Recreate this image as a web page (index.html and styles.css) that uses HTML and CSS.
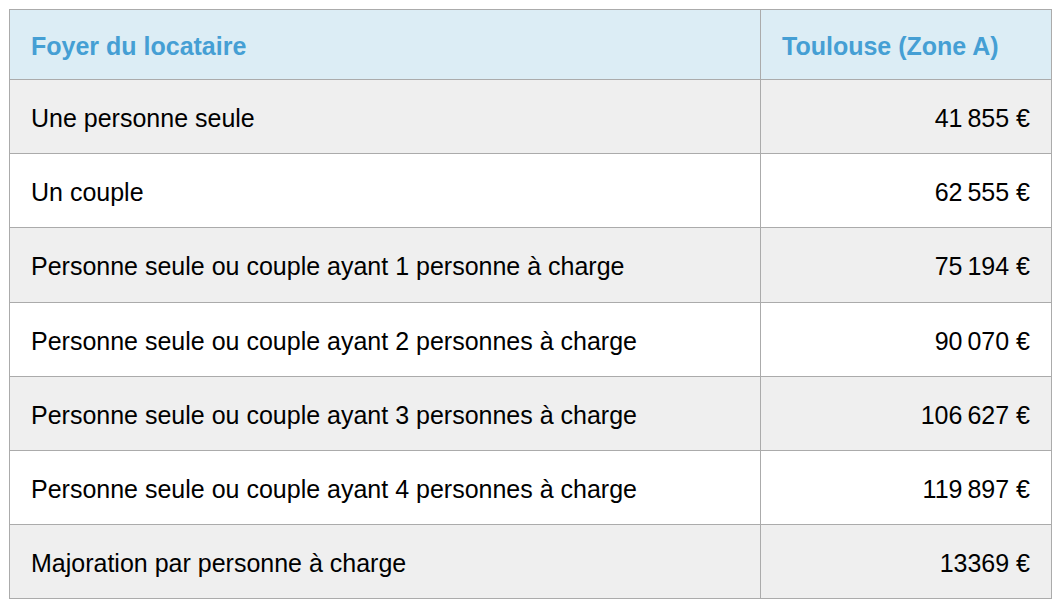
FILE: index.html
```html
<!DOCTYPE html>
<html lang="fr">
<head>
<meta charset="utf-8">
<title>Plafonds</title>
<link rel="stylesheet" href="styles.css">
</head>
<body>
<table class="tbl">
  <thead>
    <tr>
      <th class="c1">Foyer du locataire</th>
      <th class="c2">Toulouse (Zone A)</th>
    </tr>
  </thead>
  <tbody>
    <tr class="odd"><td>Une personne seule</td><td class="num">41&#8239;855 €</td></tr>
    <tr><td>Un couple</td><td class="num">62&#8239;555 €</td></tr>
    <tr class="odd"><td>Personne seule ou couple ayant 1 personne à charge</td><td class="num">75&#8239;194 €</td></tr>
    <tr><td>Personne seule ou couple ayant 2 personnes à charge</td><td class="num">90&#8239;070 €</td></tr>
    <tr class="odd"><td>Personne seule ou couple ayant 3 personnes à charge</td><td class="num">106&#8239;627 €</td></tr>
    <tr><td>Personne seule ou couple ayant 4 personnes à charge</td><td class="num">119&#8239;897 €</td></tr>
    <tr class="odd"><td>Majoration par personne à charge</td><td class="num">13369 €</td></tr>
  </tbody>
</table>
</body>
</html>
```

FILE: styles.css
```css
html, body {
  margin: 0;
  padding: 0;
  background: #ffffff;
}
body {
  padding: 9px;
  font-family: "Liberation Sans", Arial, Helvetica, sans-serif;
  color: #000;
}
.tbl {
  width: 1043px;
  border-collapse: collapse;
  font-size: 25px;
}
.tbl th, .tbl td {
  border: 1px solid #ababab;
  padding: 24px 21px 20px;
  line-height: 29.17px;
  text-align: left;
  vertical-align: middle;
}
.tbl th {
  background: #dcedf5;
  color: #459fd4;
  font-weight: bold;
  padding-top: 22px;
  padding-bottom: 18px;
  line-height: 29px;
}
.tbl .c2 {
  width: 248px;
}
.tbl tr.odd td {
  background: #efefef;
}
.tbl td.num {
  text-align: right;
}
```
